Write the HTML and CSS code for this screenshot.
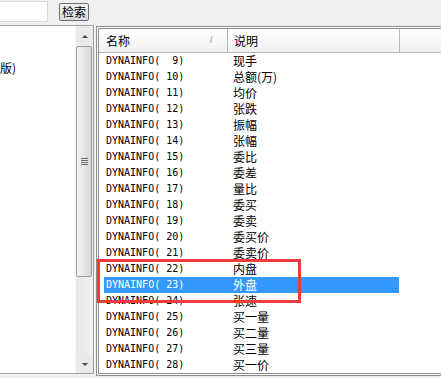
FILE: index.html
```html
<!DOCTYPE html>
<html lang="zh-CN">
<head>
  <meta charset="UTF-8" />
  <title>DYNAINFO 列表</title>
  <link rel="stylesheet" href="styles.css">
</head>
<body>
  <div class="toolbar">
    <input class="search" type="text" aria-label="搜索">
    <button class="btn">检索</button>
  </div>

  <div class="main">
    <div class="tree">
      <div class="tree-body">
        <div class="tree-item">版)</div>
      </div>
      <div class="vscroll">
        <div class="sb-btn up"><span class="arrow-up"></span></div>
        <div class="sb-thumb"><span class="grip"></span></div>
        <div class="sb-track"></div>
        <div class="sb-btn down"><span class="arrow-down"></span></div>
      </div>
    </div>

    <div class="list">
      <div class="list-head">
        <div class="hcol hcol-name">名称<span class="sort">/</span></div>
        <div class="hcol hcol-desc">说明</div>
        <div class="hcol hcol-rest"></div>
      </div>
      <div class="rows">
        <div class="row"><span class="c-name">DYNAINFO(&nbsp;&nbsp;9)</span><span class="c-desc">现手</span></div>
        <div class="row"><span class="c-name">DYNAINFO(&nbsp;10)</span><span class="c-desc">总额(万)</span></div>
        <div class="row"><span class="c-name">DYNAINFO(&nbsp;11)</span><span class="c-desc">均价</span></div>
        <div class="row"><span class="c-name">DYNAINFO(&nbsp;12)</span><span class="c-desc">张跌</span></div>
        <div class="row"><span class="c-name">DYNAINFO(&nbsp;13)</span><span class="c-desc">振幅</span></div>
        <div class="row"><span class="c-name">DYNAINFO(&nbsp;14)</span><span class="c-desc">张幅</span></div>
        <div class="row"><span class="c-name">DYNAINFO(&nbsp;15)</span><span class="c-desc">委比</span></div>
        <div class="row"><span class="c-name">DYNAINFO(&nbsp;16)</span><span class="c-desc">委差</span></div>
        <div class="row"><span class="c-name">DYNAINFO(&nbsp;17)</span><span class="c-desc">量比</span></div>
        <div class="row"><span class="c-name">DYNAINFO(&nbsp;18)</span><span class="c-desc">委买</span></div>
        <div class="row"><span class="c-name">DYNAINFO(&nbsp;19)</span><span class="c-desc">委卖</span></div>
        <div class="row"><span class="c-name">DYNAINFO(&nbsp;20)</span><span class="c-desc">委买价</span></div>
        <div class="row"><span class="c-name">DYNAINFO(&nbsp;21)</span><span class="c-desc">委卖价</span></div>
        <div class="row"><span class="c-name">DYNAINFO(&nbsp;22)</span><span class="c-desc">内盘</span></div>
        <div class="row selected"><span class="c-name">DYNAINFO(&nbsp;23)</span><span class="c-desc">外盘</span></div>
        <div class="row"><span class="c-name">DYNAINFO(&nbsp;24)</span><span class="c-desc">张速</span></div>
        <div class="row"><span class="c-name">DYNAINFO(&nbsp;25)</span><span class="c-desc">买一量</span></div>
        <div class="row"><span class="c-name">DYNAINFO(&nbsp;26)</span><span class="c-desc">买二量</span></div>
        <div class="row"><span class="c-name">DYNAINFO(&nbsp;27)</span><span class="c-desc">买三量</span></div>
        <div class="row"><span class="c-name">DYNAINFO(&nbsp;28)</span><span class="c-desc">买一价</span></div>
      </div>
    </div>
  </div>

  <div class="mark"></div>
</body>
</html>
```

FILE: styles.css
```css
body {
  margin: 0;
  padding: 0;
  width: 441px;
  height: 378px;
  overflow: hidden;
  background: #f0f0f0;
  font-family: "Noto Sans CJK SC", "Liberation Sans", sans-serif;
  font-size: 12px;
  color: #000;
  position: relative;
}

/* top bar */
.toolbar {
  display: flex;
  align-items: flex-start;
  height: 25px;
}

.search {
  box-sizing: border-box;
  margin: 1px 0 0 -10px;
  width: 58px;
  height: 21px;
  border: 1px solid #d9d9d9;
  background: #fff;
  padding: 0;
  flex-shrink: 0;
}

.btn {
  box-sizing: border-box;
  margin: 3px 0 0 11px;
  width: 30px;
  height: 18px;
  padding: 0;
  border: 1px solid #707070;
  border-radius: 2px;
  background: linear-gradient(#f2f2f2, #dcdcdc);
  font-family: "Noto Sans CJK SC", sans-serif;
  font-size: 12px;
  line-height: 14px;
  color: #000;
  flex-shrink: 0;
}

/* panels */
.main {
  display: flex;
  align-items: flex-start;
}

.tree {
  box-sizing: border-box;
  display: flex;
  flex-shrink: 0;
  margin-left: -1px;
  width: 95px;
  height: 349px;
  border: 1px solid #a0a0a0;
  background: #fff;
}

.tree-body {
  flex: 1;
  overflow: hidden;
  padding-top: 34px;
}

.tree-item {
  height: 16px;
  line-height: 16px;
  white-space: nowrap;
}

.vscroll {
  width: 17px;
  display: flex;
  flex-direction: column;
  background: #eaeaea;
  border-left: 1px solid #f4f4f4;
}

.sb-btn {
  display: flex;
  align-items: center;
  justify-content: center;
}

.sb-btn.up {
  height: 20px;
}

.sb-btn.down {
  height: 18px;
}

.arrow-up,
.arrow-down {
  width: 0;
  height: 0;
  border-left: 3px solid transparent;
  border-right: 3px solid transparent;
}

.arrow-up {
  border-bottom: 3px solid #404040;
}

.arrow-down {
  border-top: 3px solid #404040;
}

.sb-thumb {
  box-sizing: border-box;
  height: 231px;
  margin: 0 1px 0 0;
  border: 1px solid #9b9b9b;
  border-radius: 2px;
  background: linear-gradient(to right, #f4f4f4, #d6d6d6);
  display: flex;
  align-items: center;
  justify-content: center;
}

.grip {
  width: 7px;
  height: 7px;
  background: repeating-linear-gradient(#6a6a6a 0 1px, #e8e8e8 1px 2px);
}

.sb-track {
  flex: 1;
  background: linear-gradient(to right, #e6e6e6, #f2f2f2);
}

.list {
  box-sizing: border-box;
  margin: 1px 0 0 2px;
  width: 360px;
  height: 350px;
  border: 3px double #8c8c8c;
  background: #fff;
  overflow: hidden;
  flex-shrink: 0;
}

.list-head {
  display: flex;
  height: 23px;
  border-bottom: 1px solid #b2b2b2;
  background: linear-gradient(#ffffff, #f1f1f1);
}

.hcol {
  box-sizing: border-box;
  line-height: 23px;
  border-right: 1px solid #b8b8b8;
  white-space: nowrap;
}

.hcol-name {
  position: relative;
  width: 129px;
  padding-left: 7px;
}

.sort {
  position: absolute;
  left: 111px;
  top: 0;
  font-family: "Liberation Sans", sans-serif;
  font-size: 9px;
  color: #8a8a8a;
}

.hcol-desc {
  width: 172px;
  padding-left: 6px;
}

.hcol-rest {
  flex: 1;
  border-right: none;
}

.rows {
  padding-left: 5px;
}

.row {
  display: flex;
  width: 295px;
  height: 16px;
  line-height: 16px;
  white-space: nowrap;
}

.row.selected {
  background: #3399ff;
  color: #fff;
}

.c-name {
  box-sizing: border-box;
  width: 124px;
  padding-left: 2px;
  font-family: "DejaVu Sans Mono", monospace;
  font-size: 10px;
}

.c-desc {
  padding-left: 5px;
}

/* red highlight frame */
.mark {
  position: absolute;
  left: 97px;
  top: 259px;
  width: 204px;
  height: 44px;
  box-sizing: border-box;
  border: 3px solid #ee3b3b;
}
```
